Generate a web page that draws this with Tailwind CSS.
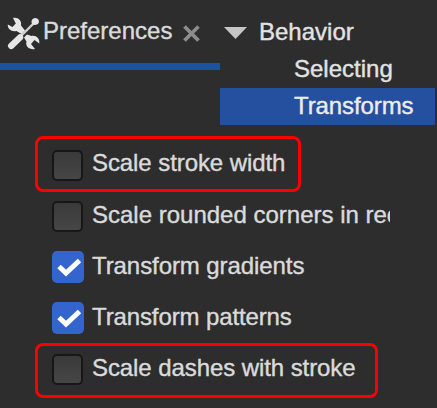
<!DOCTYPE html>
<html lang="en">
<head>
  <meta charset="UTF-8" />
  <title>Preferences</title>
  <meta name="viewport" content="width=device-width, initial-scale=1" />
  <script src="https://cdn.jsdelivr.net/npm/@tailwindcss/browser@4"></script>
</head>
<body class="bg-[#2d2d2d] text-[#dadada] font-['Liberation_Sans',sans-serif] text-[24px] leading-[37px] [-webkit-text-stroke:0.4px] w-[437px] h-[408px] overflow-hidden whitespace-nowrap">

  <!-- Header -->
  <header class="flex h-[125px]">

    <!-- Tab -->
    <div class="w-[220px] h-[70px] pt-3 border-b-[7px] border-[#2050a2] flex items-start">
      <svg class="ml-[7px] mt-[5px] w-[33px] h-[33px] shrink-0" viewBox="0 0 33 33" fill="none">
        <path d="M28 5L13 20" stroke="#cfcfcf" stroke-width="2.400" />
        <path d="M24.500 4.500Q25 1 28.500 1Q32 1.500 32 5Q31 8 27.500 8L25 7.500Z" fill="#e6e6e6" />
        <path d="M13 20.500L4.200 28.800" stroke="#e6e6e6" stroke-width="6.400" stroke-linecap="round" />
        <path d="M6 1C11 0 15 3.500 14 8.500L18 13.500L14.500 17L9.500 14C4.500 15 .3 12 .8 7.500L5.500 10L8.800 6.500Z" fill="#e6e6e6" />
        <path d="M28 32C22.500 33 18 29.500 19.500 24.500L17 20.500L20 17.500L24.500 19C29 18 33 21.500 32.300 26.500L27.500 23L24 27Z" fill="#e6e6e6" />
      </svg>
      <span class="ml-[3px]">Preferences</span>
      <svg class="ml-[11px] mt-[13px] w-[17px] h-[17px] shrink-0" viewBox="0 0 17 17">
        <path d="M1.500 1.500L15.500 15.500M15.500 1.500L1.500 15.500" stroke="#8c8c8c" stroke-width="3.800" />
      </svg>
    </div>

    <!-- Tree -->
    <div class="w-[215px] pt-[13px] text-[#e2e2e2]">
      <div class="flex items-center pl-1">
        <svg class="w-[23px] h-[12px] mt-[3px]" viewBox="0 0 23 12">
          <path d="M0 0H23L11.500 12Z" fill="#c6c6c6" />
        </svg>
        <span class="ml-3">Behavior</span>
      </div>
      <div class="pl-[74px]">Selecting</div>
      <div class="mt-px h-[37px] leading-[35px] pl-[74px] bg-[#25509f] text-[#ececec] tracking-[-0.1px]">Transforms</div>
    </div>
  </header>

  <!-- Options -->
  <main class="flex flex-col items-start pt-[11px] pl-[35px] tracking-[-0.08px]">
    <div class="flex items-center w-[266px] h-[56px] pl-[14px] border-[3px] border-[#fb0000] rounded-[8px]">
      <span class="mt-[2px] w-[31px] h-[31px] rounded-[5px] border-2 border-[#171717] bg-linear-to-b from-[#3a3a3a] to-[#464646]"></span>
      <span class="ml-[9px] -mt-1">Scale stroke width</span>
    </div>
    <div class="flex items-center w-[355px] h-[49px] pl-[17px] overflow-hidden">
      <span class="w-[31px] h-[31px] shrink-0 rounded-[5px] border-2 border-[#171717] bg-linear-to-b from-[#3a3a3a] to-[#464646]"></span>
      <span class="ml-[9px] -mt-[5px] tracking-normal">Scale rounded corners in rectangles</span>
    </div>
    <div class="flex items-center h-[51px] pl-[17px]">
      <svg class="w-[32px] h-[32px]" viewBox="0 0 32 32">
        <rect width="32" height="32" rx="5" fill="#3465ce" />
        <path d="M7 15.500L14 22L27.500 9.500" fill="none" stroke="#fff" stroke-width="5" />
      </svg>
      <span class="ml-[8px] -mt-[3px]">Transform gradients</span>
    </div>
    <div class="flex items-center h-[51px] pl-[17px]">
      <svg class="w-[32px] h-[32px]" viewBox="0 0 32 32">
        <rect width="32" height="32" rx="5" fill="#3465ce" />
        <path d="M7 15.500L14 22L27.500 9.500" fill="none" stroke="#fff" stroke-width="5" />
      </svg>
      <span class="ml-[8px] -mt-[3px] tracking-[-0.12px]">Transform patterns</span>
    </div>
    <div class="flex items-center w-[343px] h-[55px] pl-[14px] border-[3px] border-[#fb0000] rounded-[8px]">
      <span class="-mt-[2px] w-[31px] h-[31px] rounded-[5px] border-2 border-[#171717] bg-linear-to-b from-[#3a3a3a] to-[#464646]"></span>
      <span class="ml-[9px] -mt-[7px]">Scale dashes with stroke</span>
    </div>
  </main>
</body>
</html>
